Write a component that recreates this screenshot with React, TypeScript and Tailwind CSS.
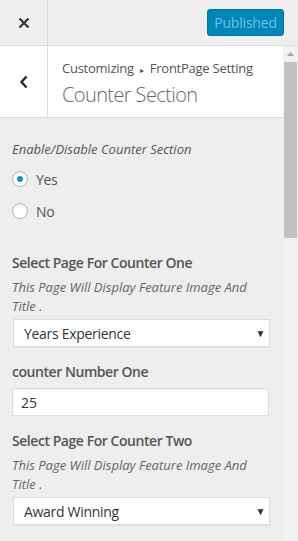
import React from 'react';

function Radio({ checked, label }: { checked?: boolean; label: string }) {
  return (
    <label className="flex items-center gap-2 h-[32px]">
      <span className="w-4 h-4 rounded-full border border-[#b4b9be] bg-white shadow-[inset_0_1px_2px_rgba(0,0,0,0.1)] flex items-center justify-center">
        {checked && <span className="w-[6px] h-[6px] rounded-full bg-[#1e8cbe]" />}
      </span>
      <span className="text-[14px] text-[#555] tracking-[-0.3px]">{label}</span>
    </label>
  );
}

function SelectBox({ value }: { value: string }) {
  return (
    <div className="mx-[1px] h-[28px] bg-white border border-[#ddd] shadow-[0_1px_1px_rgba(0,0,0,0.05)] flex items-center justify-between pl-[10px] pr-[4px] text-[14px] text-[#32373c] tracking-[-0.3px]">
      <span>{value}</span>
      <span className="text-[10px] text-[#333]">▼</span>
    </div>
  );
}

function Description() {
  return (
    <p className="italic text-[13px] leading-[19px] text-[#666] mb-[3px]">
      This Page Will Display Feature Image And Title .
    </p>
  );
}

export default function App() {
  return (
    <div
      className="w-[298px] h-[541px] bg-[#eee] overflow-hidden flex flex-col"
      style={{ fontFamily: '"Open Sans", "Noto Sans", sans-serif' }}
    >
      <div className="h-[46px] flex border-b border-[#ddd] shrink-0">
        <button className="w-[48px] border-r border-[#ddd] flex items-center justify-center text-[#333]">
          <svg width="12" height="12" viewBox="0 0 12 12">
            <path d="M1.5 1.5 L10.5 10.5 M10.5 1.5 L1.5 10.5" stroke="#333" strokeWidth="2.2" />
          </svg>
        </button>
        <div className="flex-1 flex items-center justify-end pr-[14px]">
          <button className="h-[27px] w-[77px] rounded-[3px] bg-[#0085ba] text-[#72c1e0] text-[14px] tracking-[-0.2px] border border-[#0073aa]">
            Published
          </button>
        </div>
      </div>

      <div className="flex-1 flex min-h-0">
        <div className="flex-1 flex flex-col">
          <div className="h-[72px] bg-white border-b border-[#ddd] flex shrink-0">
            <button className="w-[48px] border-r border-[#ddd] flex items-center justify-center">
              <svg width="10" height="14" viewBox="0 0 10 14">
                <path d="M7.5 1.5 L2.5 7 L7.5 12.5" fill="none" stroke="#23282d" strokeWidth="2.4" />
              </svg>
            </button>
            <div className="pl-[14px] pt-[13px]">
              <div className="text-[13px] leading-[18px] text-[#555] tracking-[-0.25px]">
                Customizing <span className="text-[8px] align-middle mx-[3px]">▸</span> FrontPage Setting
              </div>
              <div className="text-[20px] leading-[28px] font-light text-[#6a6a6a] mt-[2px] tracking-[-0.6px]">
                Counter Section
              </div>
            </div>
          </div>

          <div className="px-[12px] pt-[22px]">
            <p className="italic text-[13px] leading-[18px] text-[#555] mb-[5px]">Enable/Disable Counter Section</p>
            <Radio checked label="Yes" />
            <Radio label="No" />

            <h3 className="mt-[26px] text-[14px] font-semibold text-[#555] leading-[20px] mb-[5px] tracking-[-0.45px]">
              Select Page For Counter One
            </h3>
            <Description />
            <SelectBox value="Years Experience" />

            <h3 className="mt-[15px] text-[14px] font-semibold text-[#555] leading-[20px] mb-[6px] tracking-[-0.45px]">
              counter Number One
            </h3>
            <div className="h-[28px] bg-white border border-[#ddd] shadow-[inset_0_1px_2px_rgba(0,0,0,0.07)] flex items-center px-[8px] text-[14px] text-[#32373c] mr-[2px]">
              25
            </div>

            <h3 className="mt-[15px] text-[14px] font-semibold text-[#555] leading-[20px] mb-[5px] tracking-[-0.45px]">
              Select Page For Counter Two
            </h3>
            <Description />
            <SelectBox value="Award Winning" />
          </div>
        </div>

        <div className="w-[15px] bg-[#f1f1f1] flex flex-col items-center shrink-0">
          <div className="h-[16px] flex items-center justify-center">
            <svg width="7" height="4" viewBox="0 0 7 4">
              <path d="M0 4 L3.5 0 L7 4 Z" fill="#a3a3a3" />
            </svg>
          </div>
          <div className="w-[13px] h-[176px] bg-[#c1c1c1]" />
        </div>
      </div>
    </div>
  );
}
